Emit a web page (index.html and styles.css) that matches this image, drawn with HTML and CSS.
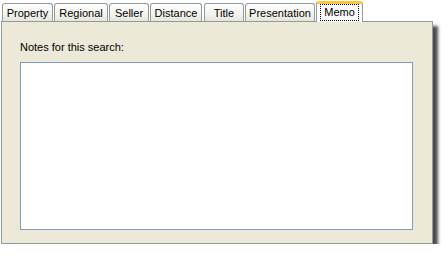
FILE: index.html
```html
<!DOCTYPE html>
<html lang="en">
<head>
  <meta charset="UTF-8" />
  <title>Search Memo</title>
  <link rel="stylesheet" href="styles.css">
</head>
<body>
  <div class="dialog">
    <!-- Abas -->
    <div class="tabs">
      <div class="tab w-property">Property</div>
      <div class="tab w-regional">Regional</div>
      <div class="tab w-seller">Seller</div>
      <div class="tab w-distance">Distance</div>
      <div class="tab w-title">Title</div>
      <div class="tab w-presentation">Presentation</div>
      <div class="tab active w-memo"><span class="focus">Memo</span></div>
    </div>

    <!-- Painel da aba Memo -->
    <div class="panel">
      <label class="caption" for="notes">Notes for this search:</label>
      <textarea id="notes" class="notes"></textarea>
    </div>
  </div>
</body>
</html>
```
FILE: styles.css
```css
/* Estilos gerais */
body {
  margin: 0;
  padding: 0;
  background: #fff;
  font-family: Tahoma, "Liberation Sans", Arial, sans-serif;
  font-size: 11px;
  color: #000;
}

.dialog {
  width: 432px;
  padding: 1px 0 0 1px;
}

/* Abas */
.tabs {
  display: flex;
  align-items: flex-end;
  height: 20px;
  padding-left: 1px;
  gap: 1px;
  position: relative;
  z-index: 1;
}

.tab {
  box-sizing: border-box;
  height: 18px;
  border: 1px solid #919b9c;
  border-bottom: none;
  border-radius: 3px 3px 0 0;
  background: linear-gradient(to bottom, #fefefe, #f4f3ee 60%, #e6e4da);
  padding-top: 3px;
  line-height: 13px;
  text-align: center;
  white-space: nowrap;
}

.w-property { width: 51px; }
.w-regional { width: 54px; }
.w-seller { width: 40px; }
.w-distance { width: 52px; margin-right: 1px; }
.w-title { width: 40px; }
.w-presentation { width: 70px; }

.tab.active {
  width: 47px;
  height: 21px;
  margin-bottom: -1px;
  background: #fcfcfe;
  border-top: 3px solid #ffc83c;
  border-color: #ffc83c #919b9c #919b9c;
  padding: 0;
}

.focus {
  display: inline-block;
  border: 1px dotted #000;
  padding: 1px 3px;
  line-height: 13px;
}

/* Painel */
.panel {
  box-sizing: border-box;
  width: 432px;
  height: 223px;
  background: #ece9d8;
  border: 1px solid #919b9c;
  padding: 16px 19px 0 18px;
  box-shadow: 5px 5px 3px rgba(0, 0, 0, 0.7);
}

.caption {
  display: block;
  height: 24px;
  line-height: 18px;
}

.notes {
  display: block;
  box-sizing: border-box;
  width: 393px;
  height: 168px;
  margin: 0;
  border: 1px solid #7f9db9;
  background: #fff;
  resize: none;
  outline: none;
}
```
